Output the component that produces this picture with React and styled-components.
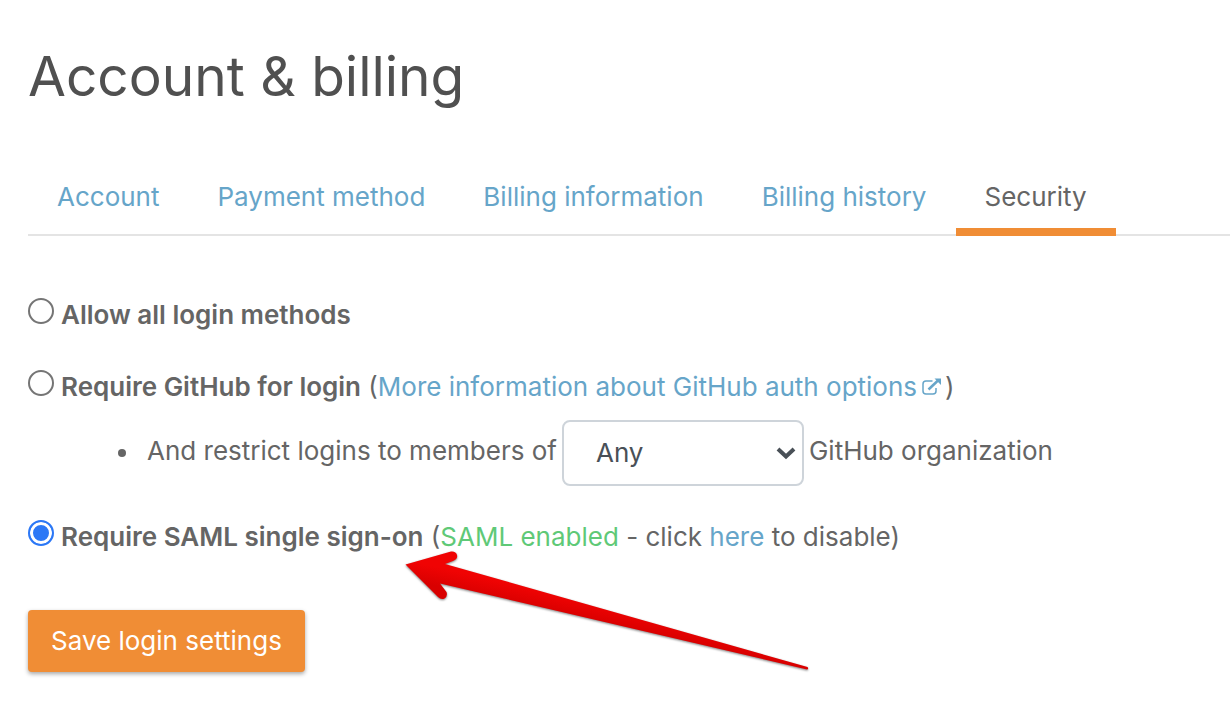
import React from "react";
import styled, { createGlobalStyle } from "styled-components";

const GlobalStyle = createGlobalStyle`
  *, *::before, *::after { box-sizing: border-box; }
  body {
    margin: 0;
    background: #fff;
    color: #656565;
    font-family: Inter, "Liberation Sans", sans-serif;
    font-size: 26px;
    line-height: 36px;
    overflow-x: hidden;
  }
`;

const Page = styled.main`
  padding: 40px 0 30px 28px;
`;

const Title = styled.h1`
  margin: 0 0 65px;
  color: #505050;
  font-size: 55px;
  font-weight: 400;
  line-height: 72px;
`;

const Tabs = styled.nav`
  display: flex;
  box-shadow: inset 0 -2px #e4e4e4;
`;

const Tab = styled.a`
  padding: 0 29px 11px;
  border-bottom: 8px solid ${(p) => (p.$active ? "#f08d35" : "transparent")};
  color: ${(p) => (p.$active ? "#656565" : "#66a5c9")};
  line-height: 40px;
  text-decoration: none;
  white-space: nowrap;
`;

const Form = styled.form`
  padding-top: 61px;
`;

const Option = styled.div`
  position: relative;
  display: flex;
  align-items: flex-start;
  gap: 7px;
  margin-bottom: ${(p) => p.$space || 36}px;
`;

const Radio = styled.input`
  appearance: none;
  flex: none;
  width: 26px;
  height: 26px;
  margin: 1px 0 0;
  border: 2px solid #757575;
  border-radius: 50%;
  background: #fff;

  &:checked {
    border-color: #2c78f6;
    background: #2c78f6;
    box-shadow: inset 0 0 0 3px #fff;
  }
`;

const OptionText = styled.div`
  white-space: nowrap;
`;

const OptionLabel = styled.label`
  font-weight: 600;
`;

const Link = styled.a`
  color: #66a5c9;
  text-decoration: none;
`;

const Enabled = styled.span`
  color: #5fc977;
`;

const ExternalIcon = styled.svg`
  width: 20px;
  height: 18px;
  margin: 0 3px 0 5px;
`;

const Restrictions = styled.ul`
  margin: 0 0 33px;
  padding: 0 0 0 90px;
  list-style: none;
`;

const Restriction = styled.li`
  display: flex;
  align-items: center;
  gap: 5px;
  white-space: nowrap;

  &::before {
    content: "";
    width: 8px;
    height: 8px;
    margin-right: 16px;
    border-radius: 50%;
    background: #656565;
  }
`;

const RestrictionLabel = styled.label`
  padding-bottom: 4px;
`;

const SelectBox = styled.div`
  position: relative;
  width: 242px;
`;

const Select = styled.select`
  appearance: none;
  display: block;
  width: 100%;
  height: 66px;
  padding: 0 48px 0 32px;
  border: 2px solid #ced4da;
  border-radius: 8px;
  background: #fff;
  color: #495057;
  font: inherit;
`;

const Chevron = styled.svg`
  position: absolute;
  top: 26px;
  right: 8px;
  width: 20px;
  height: 14px;
  pointer-events: none;
`;

const SaveButton = styled.button`
  height: 62px;
  padding: 0 23px;
  border: 0;
  border-radius: 4px;
  background: #f08d35;
  box-shadow: 0 2px 4px rgba(0, 0, 0, 0.35);
  color: #fff;
  font: inherit;
`;

const Arrow = styled.svg`
  position: absolute;
  top: 21px;
  left: 372px;
  width: 420px;
  height: 140px;
  overflow: visible;
  pointer-events: none;
  filter: drop-shadow(0 1px 1px rgba(0, 0, 0, 0.5));
`;

const TABS = ["Account", "Payment method", "Billing information", "Billing history", "Security"];

export default function App() {
  return (
    <Page>
      <GlobalStyle />
      <Title>Account &amp; billing</Title>
      <Tabs>
        {TABS.map((name) => (
          <Tab key={name} href="#" $active={name === "Security"}>
            {name}
          </Tab>
        ))}
      </Tabs>
      <Form onSubmit={(e) => e.preventDefault()}>
        <Option>
          <Radio type="radio" name="login" id="login-all" />
          <OptionText>
            <OptionLabel htmlFor="login-all">Allow all login methods</OptionLabel>
          </OptionText>
        </Option>
        <Option $space={15}>
          <Radio type="radio" name="login" id="login-github" />
          <OptionText>
            <OptionLabel htmlFor="login-github">Require GitHub for login</OptionLabel> (
            <Link href="#">
              More information about GitHub auth options
              <ExternalIcon viewBox="0 0 20 18" fill="none" stroke="currentColor" aria-hidden="true">
                <path d="M10.500 3H4Q1 3 1 6v7Q1 16 4 16h7Q14 16 14 13V10" strokeWidth="1.500" />
                <path d="M6.500 11.500L16 2.500" strokeWidth="2.500" />
                <path d="M12.500 .500H19V7z" fill="currentColor" stroke="none" />
              </ExternalIcon>
            </Link>
            )
          </OptionText>
        </Option>
        <Restrictions>
          <Restriction>
            <RestrictionLabel htmlFor="org">And restrict logins to members of</RestrictionLabel>
            <SelectBox>
              <Select id="org" defaultValue="any">
                <option value="any">Any</option>
              </Select>
              <Chevron viewBox="0 0 20 14" fill="none" stroke="#495057" strokeWidth="4" aria-hidden="true">
                <path d="M2 3l8 7.500L18 3" />
              </Chevron>
            </SelectBox>
            <RestrictionLabel htmlFor="org">GitHub organization</RestrictionLabel>
          </Restriction>
        </Restrictions>
        <Option $space={55}>
          <Radio type="radio" name="login" id="login-saml" defaultChecked />
          <OptionText>
            <OptionLabel htmlFor="login-saml">Require SAML single sign-on</OptionLabel> (
            <Enabled>SAML enabled</Enabled> - click <Link href="#">here</Link> to disable)
          </OptionText>
          <Arrow viewBox="400 540 420 140" aria-hidden="true">
            <defs>
              <linearGradient id="arrow-fill" gradientUnits="userSpaceOnUse" x1="504" y1="582" x2="500" y2="600">
                <stop offset="0" stopColor="#f00303" />
                <stop offset="1" stopColor="#d90000" />
              </linearGradient>
            </defs>
            <path
              fill="url(#arrow-fill)"
              d="M405.500 564.500L451 551.500Q456 551 457 555Q458 559 453 561L445 564L807.500 667Q809 669 807 669.500L440 583.500L446.500 592Q448 596 444.500 598.500Q441 600 438 597Z"
            />
          </Arrow>
        </Option>
        <SaveButton type="submit">Save login settings</SaveButton>
      </Form>
    </Page>
  );
}
